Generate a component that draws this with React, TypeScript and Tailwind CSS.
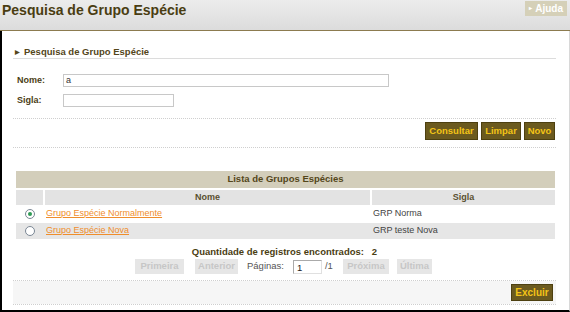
import React from "react";

const Btn = ({ label, w }: { label: string; w: string }) => (
  <button className={`h-[18px] ${w} bg-[#6b5a1f] border border-[#4d4010] text-[#f3c417] text-[9.5px] font-bold leading-none`}>
    {label}
  </button>
);

const Off = ({ label, w }: { label: string; w: string }) => (
  <span className={`h-[15px] ${w} bg-[#e6e6e6] text-[#c6c6c6] text-[9.5px] font-bold flex items-center justify-center`}>{label}</span>
);

const Radio = ({ on }: { on?: boolean }) => (
  <span className="w-[10px] h-[10px] rounded-full border border-[#7a8694] bg-white flex items-center justify-center">
    {on && <span className="w-[4px] h-[4px] rounded-full bg-[#2f9a55]" />}
  </span>
);

const Dots = () => <div className="border-t border-dotted border-[#cfcfcf]" />;

export default function App() {
  return (
    <div
      className="w-[570px] h-[312px] bg-white overflow-hidden flex flex-col text-[#4b4016]"
      style={{ fontFamily: '"Liberation Sans", Arial, sans-serif' }}
    >
      <div className="h-[31px] shrink-0 flex justify-between bg-gradient-to-b from-[#ececec] to-[#dcdcdc] border-b border-[#8c7b4f]">
        <h1 className="pl-[2px] pt-[2px] text-[14px] font-bold text-[#4a3d12] leading-[16px]">Pesquisa de Grupo Espécie</h1>
        <span className="mt-[1px] mr-[3px] h-[15px] px-[4px] bg-[#d5d0b8] text-white text-[10px] font-bold flex items-center gap-[3px]">
          <span className="text-[6px]">▸</span>Ajuda
        </span>
      </div>

      <div className="flex-1 flex flex-col border-l-2 border-b-2 border-black border-r border-r-[#d8d8d8] pl-[11px] pr-[13px]">
        <div className="mt-[15px] h-[13px] border-b border-[#dcdcdc] flex items-center gap-[4px] pl-[2px] text-[9.5px] font-bold text-[#54461a]">
          <span className="text-[6px]">▶</span>Pesquisa de Grupo Espécie
        </div>

        <div className="mt-[15px] flex items-center h-[13px] pl-[4px]">
          <span className="w-[46px] text-[9px] font-bold">Nome:</span>
          <span className="w-[326px] h-[13px] border border-[#c8c8c8] text-[9px] text-[#333] pl-[2px] leading-[11px]">a</span>
        </div>
        <div className="mt-[7px] flex items-center h-[13px] pl-[4px]">
          <span className="w-[46px] text-[9px] font-bold">Sigla:</span>
          <span className="w-[111px] h-[13px] border border-[#c8c8c8]" />
        </div>

        <div className="mt-[11px]"><Dots /></div>
        <div className="mt-[3px] flex justify-end gap-[3px] pr-[1px]">
          <Btn label="Consultar" w="w-[53px]" />
          <Btn label="Limpar" w="w-[40px]" />
          <Btn label="Novo" w="w-[31px]" />
        </div>
        <div className="mt-[7px]"><Dots /></div>

        <div className="mt-[23px] ml-[3px] mr-[1px] flex flex-col text-[9px]">
          <div className="h-[17px] bg-[#d3cebb] flex items-center justify-center text-[9.5px] font-bold text-[#54461a]">
            Lista de Grupos Espécies
          </div>
          <div className="mt-[2px] h-[15px] flex gap-[2px] font-bold text-[#5a5030]">
            <span className="w-[27px] bg-[#e3e3e3]" />
            <span className="w-[325px] bg-[#e3e3e3] flex items-center justify-center">Nome</span>
            <span className="flex-1 bg-[#e3e3e3] flex items-center justify-center">Sigla</span>
          </div>
          <div className="mt-[1px] h-[16px] flex gap-[2px] items-center">
            <span className="w-[27px] flex justify-center"><Radio on /></span>
            <a className="w-[325px] pl-[1px] text-[#ef8d2c] underline">Grupo Espécie Normalmente</a>
            <span className="flex-1 pl-[1px] text-[#444]">GRP Norma</span>
          </div>
          <div className="mt-[1px] h-[16px] flex gap-[2px] items-center bg-[#e6e6e6]">
            <span className="w-[27px] flex justify-center"><Radio /></span>
            <a className="w-[325px] pl-[1px] text-[#ef8d2c] underline">Grupo Espécie Nova</a>
            <span className="flex-1 pl-[1px] text-[#444]">GRP teste Nova</span>
          </div>
        </div>

        <div className="mt-[7px] h-[13px] flex items-center justify-center text-[9.5px] font-bold text-[#4a3d12]">
          Quantidade de registros encontrados:&nbsp;&nbsp;&nbsp;2
        </div>
        <div className="h-[15px] flex items-center pl-[122px] text-[9.5px] text-[#555]">
          <Off label="Primeira" w="w-[49px]" />
          <span className="ml-[11px]"><Off label="Anterior" w="w-[43px]" /></span>
          <span className="ml-[9px]">Páginas:</span>
          <span className="ml-[9px] w-[29px] h-[14px] bg-white border border-[#aaa] border-r-[#e0e0e0] border-b-[#e0e0e0] pl-[3px] leading-[13px] text-[#222]">1</span>
          <span className="ml-[3px]">/1</span>
          <span className="ml-[10px]"><Off label="Próxima" w="w-[46px]" /></span>
          <span className="ml-[8px]"><Off label="Última" w="w-[35px]" /></span>
        </div>

        <div className="mt-[6px]"><Dots /></div>
        <div className="h-[23px] bg-[#f6f6f6] flex items-center justify-end pr-[3px]">
          <button className="h-[17px] w-[42px] bg-[#6b5a1f] border border-[#4d4010] text-[#f3c417] text-[10px] font-bold leading-none">
            Excluir
          </button>
        </div>
        <Dots />
      </div>
    </div>
  );
}
